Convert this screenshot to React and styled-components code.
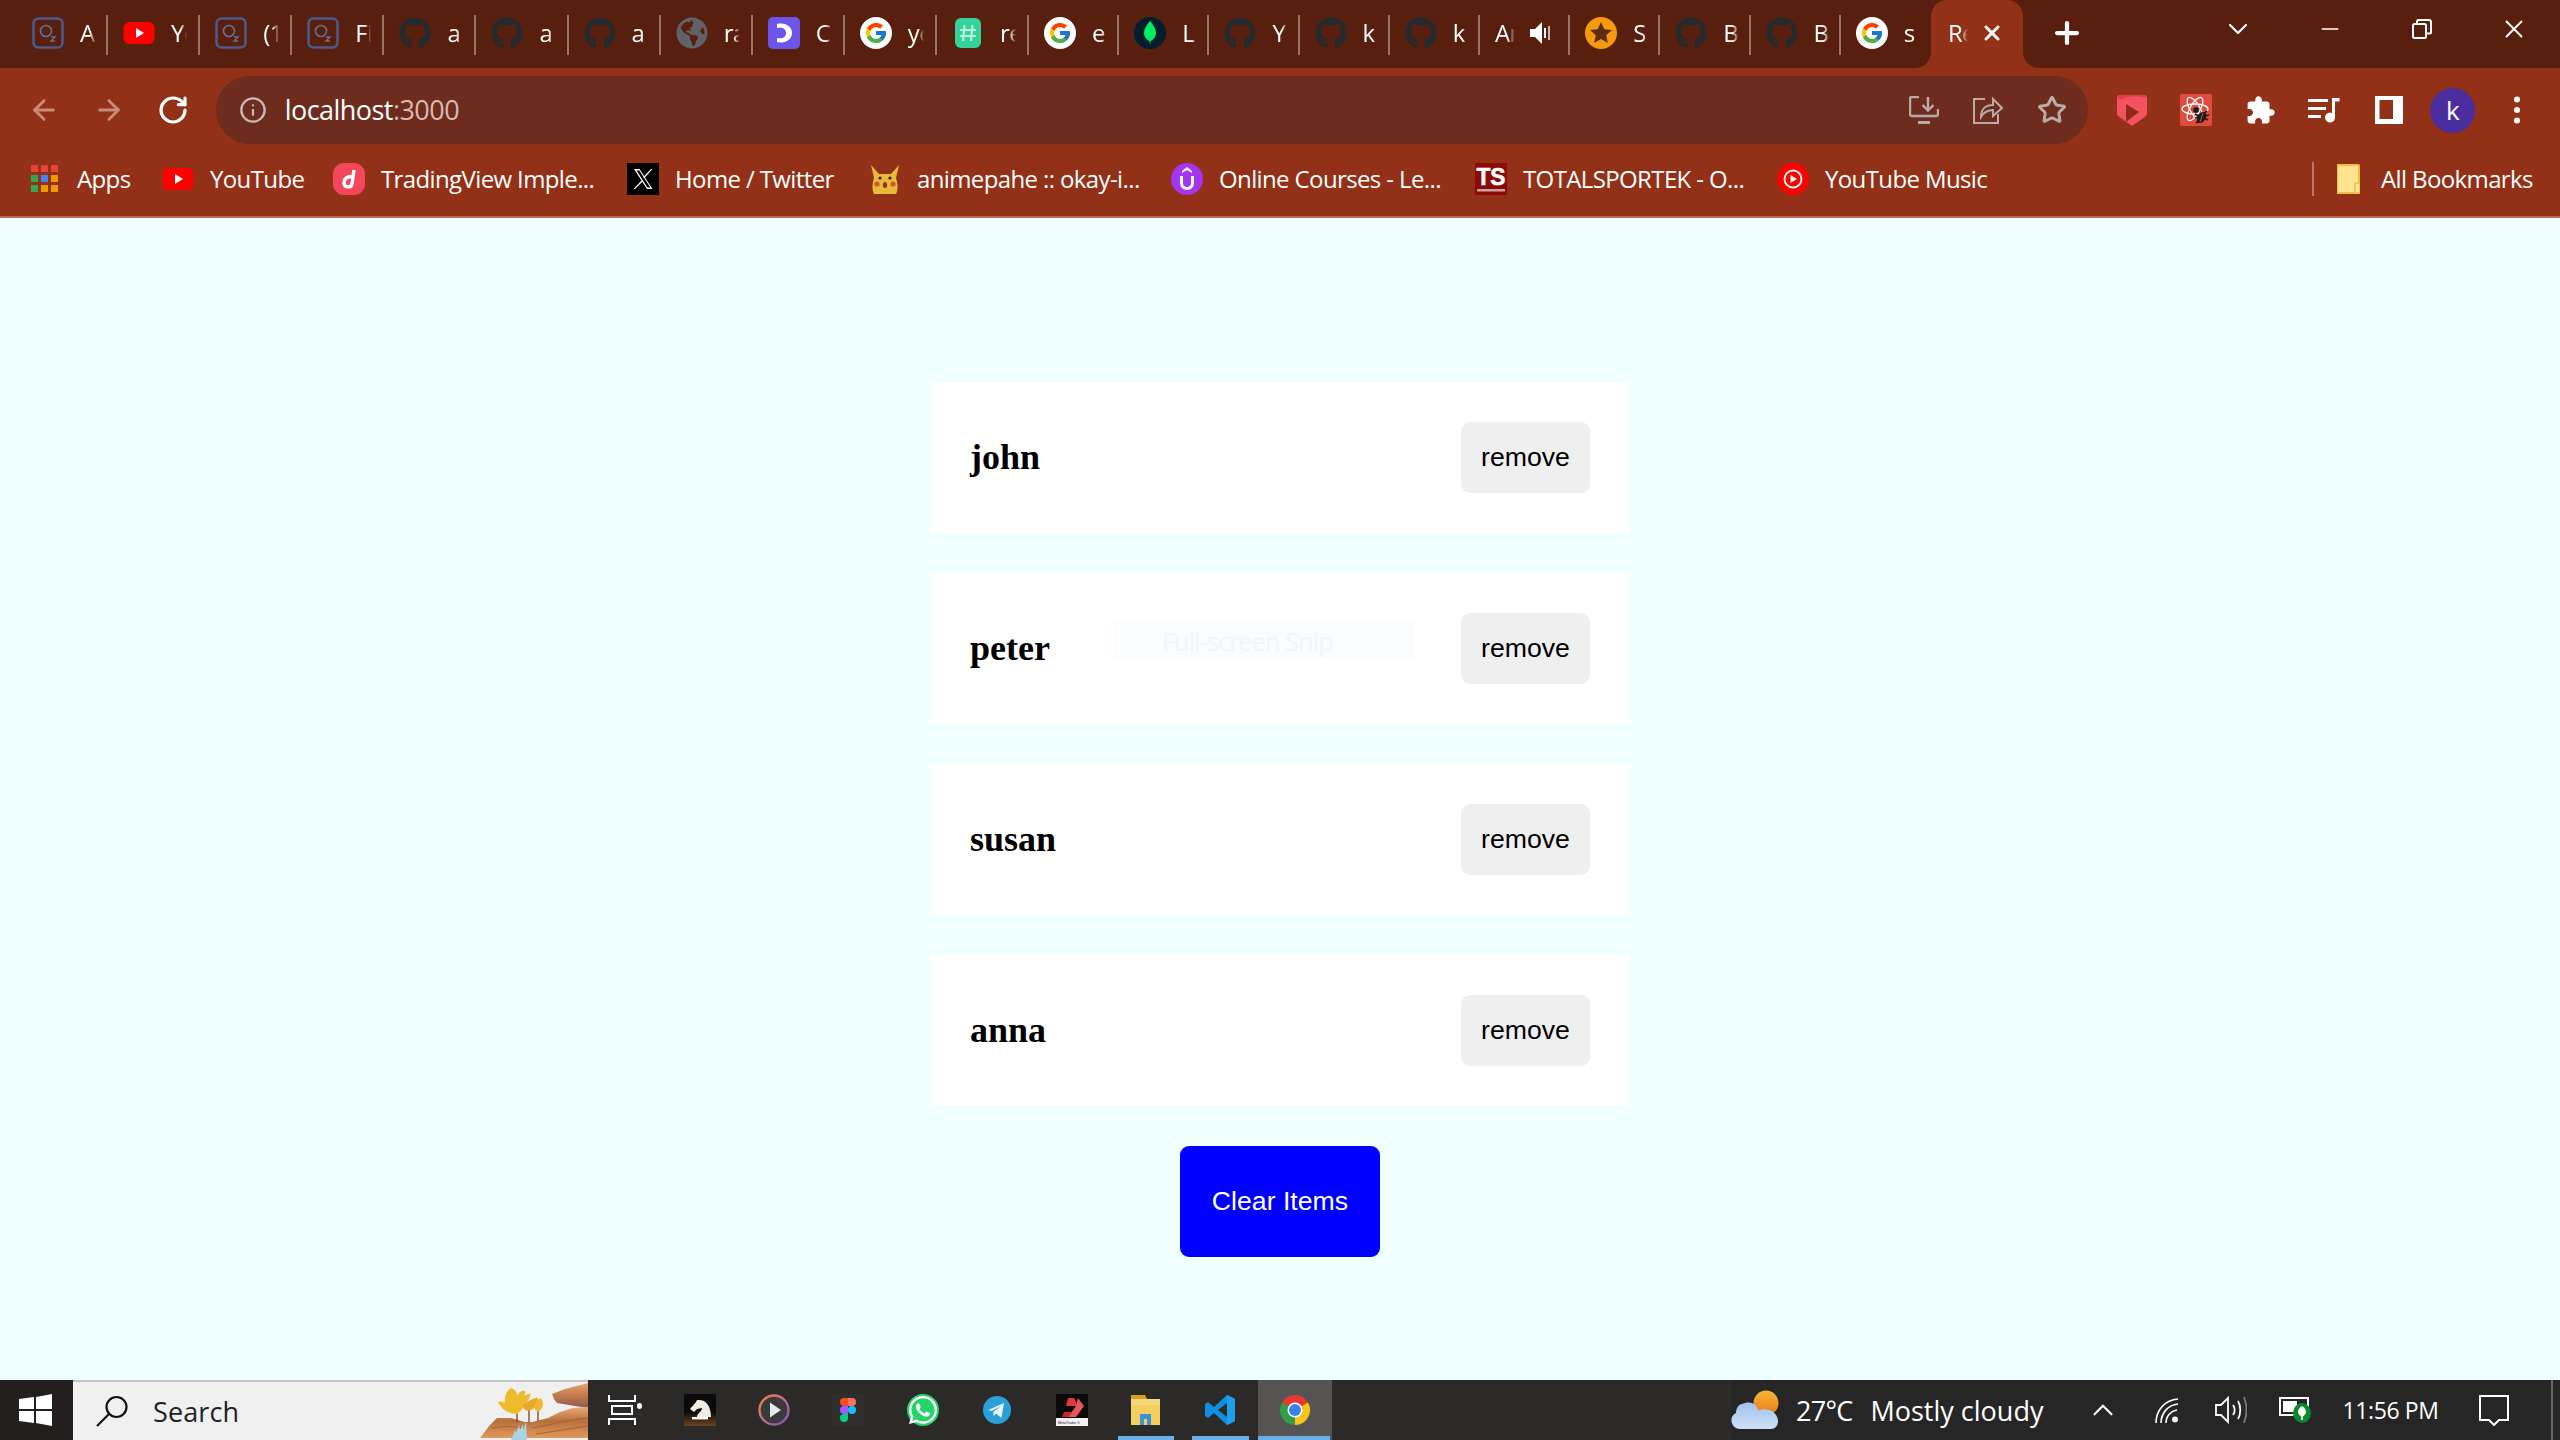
import React from "react";
import styled, { createGlobalStyle } from "styled-components";
import { ArrowLeft, ArrowRight, RotateCw, Star, X, Plus, ChevronDown, ChevronUp, Minus, Info } from "lucide-react";
import { FaGithub, FaGlobeAmericas, FaWhatsapp } from "react-icons/fa";
import { FcGoogle } from "react-icons/fc";

const FRAME = "#591f0e";
const BAR = "#923018";
const UI = '"Open Sans", "Noto Sans", sans-serif';

const Global = createGlobalStyle`
  html, body { margin: 0; padding: 0; background: #f0ffff; }
  * { box-sizing: border-box; }
`;

const Shell = styled.div`
  display: flex; flex-direction: column; width: 2560px; height: 1440px; overflow: hidden;
  font-family: ${UI};
`;

/* ---------- tab strip ---------- */
const TabStrip = styled.div`
  display: flex; height: 68px; background: ${FRAME}; padding-left: 16px; flex: none;
`;
const Tab = styled.div`
  display: flex; align-items: center; height: 68px; width: ${(p) => p.$w}px; flex: none;
  padding-left: ${(p) => (p.$first ? 16 : 15)}px; padding-bottom: 3px; color: #fff; position: relative;
`;
const TabIcon = styled.span`
  display: flex; align-items: center; justify-content: center; width: 32px; height: 32px; flex: none;
  margin-right: 16px;
`;
const TabLabel = styled.span`
  display: block; width: ${(p) => p.$w || 16}px; overflow: hidden; white-space: nowrap; flex: none;
  font-size: 24px; line-height: 32px; letter-spacing: -0.6px;
  -webkit-mask-image: linear-gradient(90deg, #000 60%, transparent);
  mask-image: linear-gradient(90deg, #000 60%, transparent);
`;
const TabGlyph = styled.span`
  display: flex; margin-left: ${(p) => p.$ml}px; flex: none;
`;
const TabSep = styled.span`
  position: absolute; right: 0; top: 15px; width: 2px; height: 40px; background: rgba(255, 255, 255, 0.38);
`;
const ActiveTab = styled.div`
  position: relative; display: flex; align-items: center; flex: none; width: 92px; height: 68px;
  padding: 0 0 3px 17px; background: ${BAR}; color: #fff; border-radius: 16px 16px 0 0;
  &::before, &::after { content: ""; position: absolute; bottom: 0; width: 16px; height: 16px; }
  &::before { left: -16px; background: radial-gradient(circle at 0 0, transparent 15.5px, ${BAR} 16.5px); }
  &::after { right: -16px; background: radial-gradient(circle at 100% 0, transparent 15.5px, ${BAR} 16.5px); }
`;
const NewTab = styled.span`
  display: flex; align-items: center; justify-content: center; width: 40px; height: 66px; margin-left: 24px; color: #fff;
`;
const WinControls = styled.div`
  display: flex; margin-left: auto;
`;
const WinBtn = styled.span`
  display: flex; align-items: center; justify-content: center; width: 92px; height: 58px; color: #fff;
`;
const GoogleBadge = styled.span`
  display: flex; align-items: center; justify-content: center; width: 32px; height: 32px; border-radius: 50%; background: #fff;
`;

/* ---------- toolbar ---------- */
const Toolbar = styled.div`
  display: flex; align-items: flex-end; height: 76px; background: ${BAR}; padding-left: 12px; flex: none;
`;
const NavBtn = styled.span`
  display: flex; align-items: center; justify-content: center; width: 64.6px; height: 68px; flex: none;
  color: ${(p) => (p.$dim ? "#c78c78" : "#fff")};
`;
const Omnibox = styled.div`
  display: flex; align-items: center; width: 1872px; height: 68px; margin-left: 10px; padding: 0 4px 0 23px;
  border-radius: 34px; background: #6d2c1d; flex: none;
`;
const Address = styled.span`
  margin-left: 18px; font-size: 27px; letter-spacing: -0.55px; color: #fff; line-height: 34px;
`;
const Port = styled.span`
  color: #d9b9ae;
`;
const OmniIcons = styled.div`
  display: flex; margin-left: auto;
`;
const OmniBtn = styled.span`
  display: flex; align-items: center; justify-content: center; width: 64px; height: 68px; color: #b9aca8;
`;
const ExtIcons = styled.div`
  display: flex; margin-left: 12px;
`;
const ExtBtn = styled.span`
  display: flex; align-items: center; justify-content: center; width: 64.2px; height: 68px; color: #fff;
`;
const Avatar = styled.span`
  display: flex; align-items: center; justify-content: center; width: 45px; height: 45px; border-radius: 50%;
  background: #4a2ea0; color: #fff; font-size: 26px; line-height: 1;
`;

/* ---------- bookmarks ---------- */
const BookmarkBar = styled.div`
  display: flex; align-items: center; height: 74px; background: #933118; padding: 0 0 2px 29px; flex: none;
  border-bottom: 2px solid #b06a55; color: #fff;
`;
const Bookmark = styled.div`
  display: flex; align-items: center; gap: 16px; width: ${(p) => p.$w}px; flex: none;
`;
const BmIcon = styled.span`
  display: flex; align-items: center; justify-content: center; width: 32px; height: 32px; flex: none;
`;
const BmText = styled.span`
  font-size: 24px; line-height: 32px; white-space: nowrap; letter-spacing: -0.62px;
`;
const BmSep = styled.span`
  width: 2px; height: 34px; background: rgba(255, 255, 255, 0.35); margin-left: auto; margin-right: 23px;
`;
const AllBookmarks = styled.div`
  display: flex; align-items: center; gap: 21px; width: 223px; flex: none;
`;

/* ---------- page ---------- */
const Main = styled.main`
  flex: 1; background: #f0ffff; padding-top: 164px;
  display: flex; flex-direction: column; align-items: center;
  font-family: "Liberation Serif", serif;
`;
const Card = styled.article`
  position: relative; display: flex; align-items: center; justify-content: space-between;
  width: 700px; height: 151px; margin-bottom: 40px; padding: 40px; background: #fff;
`;
const Name = styled.h4`
  margin: 0; font-size: 36px; line-height: 41px; font-weight: 700; color: #000; font-family: "Liberation Serif", serif;
`;
const RemoveBtn = styled.button`
  width: 129px; height: 71px; padding: 0; border: 0; border-radius: 9px; background: #efefef; color: #000;
  font-family: "Liberation Sans", Arial, sans-serif; font-size: 26.67px;
`;
const ClearBtn = styled.button`
  width: 200px; height: 111px; padding: 0; border: 0; border-radius: 9px; background: #0000ff; color: #fff;
  font-family: "Liberation Sans", Arial, sans-serif; font-size: 26.67px;
`;
const SnipToast = styled.div`
  position: absolute; left: 183px; top: 47px; width: 301px; height: 38px; background: #fbfcff; color: #f2f4f8;
  font-family: ${UI}; font-size: 25px; line-height: 36px; letter-spacing: -0.8px; padding: 3px 0 0 49px; overflow: hidden;
`;

/* ---------- taskbar ---------- */
const Taskbar = styled.footer`
  display: flex; align-items: stretch; height: 60px; background: #2b2a29; flex: none; color: #fff;
`;
const Start = styled.div`
  display: flex; align-items: center; justify-content: center; width: 73px; background: #231f1f; padding-right: 2px;
`;
const SearchBox = styled.div`
  display: flex; align-items: center; width: 515px; background: #f0f0f0; border-top: 2px solid #c4c4c4;
  padding-left: 23px; color: #222; overflow: hidden; flex: none;
`;
const SearchText = styled.span`
  margin-left: 24px; font-size: 27px; letter-spacing: 0.1px;
`;
const SearchArt = styled.svg`
  margin-left: auto; flex: none; display: block;
`;
const Slot = styled.div`
  position: relative; display: flex; align-items: center; justify-content: center; width: 74.4px; flex: none;
  background: ${(p) => (p.$active ? "#555453" : "transparent")};
  &::after {
    content: ""; display: ${(p) => (p.$open ? "block" : "none")}; position: absolute; bottom: 0; height: 4px;
    left: ${(p) => (p.$active ? 0 : 9)}px; right: ${(p) => (p.$active ? 2 : 9)}px; background: #6db0e8;
  }
`;
const WhatsBadge = styled.span`
  display: flex; width: 32px; height: 32px; border-radius: 50%; background: #25d366;
`;
const Tray = styled.div`
  display: flex; align-items: center; margin-left: auto; background: #262626;
`;
const Weather = styled.div`
  display: flex; align-items: center; width: 313px; font-size: 27px; letter-spacing: -0.75px; margin-right: 27px; flex: none;
`;
const WeatherArt = styled.svg`
  display: block; flex: none;
`;
const Temp = styled.span`
  margin-left: 16px; margin-right: 18px;
`;
const Sky = styled.span`
  letter-spacing: 0;
`;
const TrayBtn = styled.div`
  display: flex; align-items: center; justify-content: center; width: 64px; height: 60px; flex: none;
`;
const Clock = styled.div`
  width: 127px; text-align: center; font-size: 23px; letter-spacing: -0.4px; flex: none;
`;
const NotifBtn = styled.div`
  display: flex; align-items: center; justify-content: center; width: 80px; height: 60px; margin-right: 17px; flex: none;
`;
const ShowDesktop = styled.div`
  width: 9px; height: 60px; border-left: 2px solid #6a6a6a; flex: none;
`;

/* ---------- drawings ---------- */
const O2 = () => (
  <svg width="32" height="32" viewBox="0 0 32 32">
    <rect x="1.5" y="1.5" width="29" height="29" rx="5" fill="none" stroke="#4c5a8c" strokeWidth="2.5" />
    <circle cx="14" cy="14" r="5.5" fill="none" stroke="#66708f" strokeWidth="1.6" />
    <path d="M19 20h4l-4 4h4" fill="none" stroke="#66708f" strokeWidth="1.4" />
  </svg>
);
const Yt = () => (
  <svg width="32" height="32" viewBox="0 0 32 32">
    <rect x="0.5" y="5" width="31" height="22" rx="6" fill="#ff0000" />
    <path d="M13 11l8 5-8 5z" fill="#fff" />
  </svg>
);
const Gh = () => <FaGithub size={32} color="#24292e" />;
const Globe = () => <FaGlobeAmericas size={32} color="#5f6368" />;
const Purple = () => (
  <svg width="32" height="32" viewBox="0 0 32 32">
    <rect width="32" height="32" rx="5" fill="#6c55e8" />
    <path d="M9 7c9-2 15 3 15 9s-6 11-15 9v-4c6 1 9-1 9-5s-3-6-9-5z" fill="#fff" />
  </svg>
);
const G = () => (
  <GoogleBadge><FcGoogle size={24} /></GoogleBadge>
);
const Mint = () => (
  <svg width="32" height="32" viewBox="0 0 32 32">
    <rect x="3" y="1" width="26" height="30" rx="6" fill="#35d39c" />
    <path d="M12.5 8l-1.5 16M20.5 8l-1.5 16M8 13h16M8 19h16" stroke="#bff3de" strokeWidth="2" fill="none" />
  </svg>
);
const Mongo = () => (
  <svg width="32" height="32" viewBox="0 0 32 32">
    <circle cx="16" cy="16" r="16" fill="#001e2b" />
    <path d="M16 4c4 5 6 8 6 12 0 4-3 7-5.4 8L16 28l-.6-4C13 23 10 20 10 16c0-4 2-7 6-12z" fill="#00ed64" />
  </svg>
);
const StarBadge = () => (
  <svg width="32" height="32" viewBox="0 0 32 32">
    <circle cx="16" cy="16" r="16" fill="#f59a0c" />
    <path d="M16 5l3.3 7.2 7.7.8-5.8 5.2 1.7 7.8-6.9-4-6.9 4 1.7-7.8L5 13l7.7-.8z" fill="#5b2c10" />
  </svg>
);
const Speaker = () => (
  <svg width="22" height="26" viewBox="0 0 22 26">
    <path d="M1 9h5l7-7v22l-7-7H1z" fill="#fff" />
    <rect x="15" y="8" width="2" height="10" fill="#fff" />
    <rect x="19" y="6" width="2" height="14" fill="#bbb" />
  </svg>
);
const Apps = () => (
  <svg width="28" height="28" viewBox="0 0 28 28">
    {[["#ea4335", "#ea4335", "#ea4335"], ["#34a853", "#4285f4", "#f29900"], ["#34a853", "#f29900", "#f29900"]].map((row, r) =>
      row.map((c, i) => <rect key={`${r}${i}`} x={i * 10} y={r * 10} width="7" height="7" fill={c} />)
    )}
  </svg>
);
const Trading = () => (
  <svg width="32" height="32" viewBox="0 0 32 32">
    <rect width="32" height="32" rx="11" fill="#f4475b" />
    <path d="M21 7l-2 14c-1 4-8 4-8-1 0-5 4-7 9-6" fill="none" stroke="#fff" strokeWidth="3.4" />
  </svg>
);
const XLogo = () => (
  <svg width="32" height="32" viewBox="0 0 32 32">
    <rect width="32" height="32" fill="#000" />
    <path d="M7 6h5.5l13 20H20zM9.5 7.5l11 17h2.8l-11-17z" fill="#fff" fillRule="evenodd" />
    <path d="M24 6h1.5L17 15.5l-.8-1.2zM14.5 17.5l.8 1.2L8 26H6.5z" fill="#fff" />
  </svg>
);
const Pika = () => (
  <svg width="32" height="32" viewBox="0 0 32 32">
    <path d="M2 2l8 9h12l8-9-3 13c2 6 2 12 0 16H5C3 27 3 21 5 15z" fill="#e8b93a" />
    <circle cx="11" cy="15" r="1.6" fill="#222" />
    <circle cx="21" cy="15" r="1.6" fill="#222" />
    <circle cx="8" cy="21" r="2.6" fill="#d6562c" />
    <circle cx="24" cy="21" r="2.6" fill="#d6562c" />
    <ellipse cx="16" cy="22" rx="2" ry="3" fill="#8a3020" />
  </svg>
);
const Udemy = () => (
  <svg width="32" height="32" viewBox="0 0 32 32">
    <circle cx="16" cy="16" r="16" fill="#a435f0" />
    <path d="M16 4l5 4v2l-5-3-5 3V8z" fill="#fff" />
    <path d="M10.5 13v7a5.5 5.5 0 0011 0v-7" fill="none" stroke="#fff" strokeWidth="3" />
  </svg>
);
const Ts = () => (
  <svg width="32" height="32" viewBox="0 0 32 32">
    <rect width="32" height="32" fill="#8c0a0a" />
    <text x="16" y="22" textAnchor="middle" fontFamily="Liberation Sans, sans-serif" fontWeight="700" fontSize="24" fill="#fff" stroke="#fff" strokeWidth="0.6" textLength="29" lengthAdjust="spacingAndGlyphs">TS</text>
    <rect x="2" y="26" width="28" height="2.5" fill="#c9a3a3" />
  </svg>
);
const YtMusic = () => (
  <svg width="32" height="32" viewBox="0 0 32 32">
    <circle cx="16" cy="16" r="16" fill="#ff0000" />
    <circle cx="16" cy="16" r="8.5" fill="none" stroke="#fff" strokeWidth="1.8" />
    <path d="M13.5 12l6.5 4-6.5 4z" fill="#fff" />
  </svg>
);
const Folder = () => (
  <svg width="23" height="30" viewBox="0 0 23 30">
    <rect x="0" y="1" width="22" height="28" rx="1" fill="#fde28f" stroke="#eec042" strokeWidth="2" />
    <rect x="18" y="19" width="5" height="10" rx="1" fill="#fde28f" stroke="#eec042" strokeWidth="1.5" />
  </svg>
);
const Restore = () => (
  <svg width="20" height="20" viewBox="0 0 20 20" fill="none" stroke="#fff" strokeWidth="2">
    <rect x="1" y="5" width="13" height="14" rx="1.5" />
    <path d="M5 5V2.5A1.5 1.5 0 016.5 1h10A2 2 0 0119 3v10a1.5 1.5 0 01-1.5 1.5H14" />
  </svg>
);
const InstallIcon = () => (
  <svg width="30" height="28" viewBox="0 0 30 28" fill="none" stroke="currentColor" strokeWidth="2.4">
    <path d="M10 1H3a2 2 0 00-2 2v15a2 2 0 002 2h24a2 2 0 002-2v-5" />
    <path d="M19 1v13M13.5 9l5.5 5.5L24.5 9" />
    <path d="M9 25h12v3H9z" fill="currentColor" stroke="none" />
  </svg>
);
const ShareIcon = () => (
  <svg width="30" height="28" viewBox="0 0 30 28" fill="none" stroke="currentColor" strokeWidth="2">
    <path d="M12 3H1v24h24V18" />
    <path d="M8 21c0-8 5-12 12-12V3l9 9-9 8v-6c-5 0-9 2-12 7z" />
  </svg>
);
const Pocket = () => (
  <svg width="30" height="31" viewBox="0 0 30 31">
    <path d="M3 0h24a3 3 0 013 3v15c0 2-1 3-3 4.5L15 31 3 22.5C1 21 0 20 0 18V3a3 3 0 013-3z" fill="#f4525f" />
    <path d="M0 3a3 3 0 013-3h24a3 3 0 013 3c-6-2-18-2-22 0-3 2-5 1-8 0z" fill="#dd3f4f" />
    <path d="M9 9l13 8-13 10z" fill="#8f2a18" />
  </svg>
);
const ReactExt = () => (
  <svg width="32" height="32" viewBox="0 0 32 32">
    <rect width="32" height="32" rx="2" fill="#df4b3d" />
    <g fill="none" stroke="#fff" strokeWidth="1.3">
      <ellipse cx="15" cy="15" rx="13" ry="5" />
      <ellipse cx="15" cy="15" rx="13" ry="5" transform="rotate(60 15 15)" />
      <ellipse cx="15" cy="15" rx="13" ry="5" transform="rotate(120 15 15)" />
    </g>
    <circle cx="16" cy="16" r="2.8" fill="#1c1c1c" />
    <g stroke="#1c1c1c" strokeWidth="1.6" fill="none">
      <path d="M15 20l4 2M15 24l4-1M16 29l4-3M27 17l-4 3M29 21l-5 1M28 26l-4-2" />
    </g>
    <ellipse cx="21.5" cy="23.5" rx="4.2" ry="6" transform="rotate(35 21.5 23.5)" fill="#1c1c1c" />
    <path d="M23 19l-3 9" stroke="#df4b3d" strokeWidth="1" />
  </svg>
);
const Puzzle = () => (
  <svg width="31" height="31" viewBox="0 0 24 24" fill="#fff">
    <path d="M20.5 11H19V7c0-1.1-.9-2-2-2h-4V3.5C13 2.12 11.88 1 10.5 1S8 2.12 8 3.5V5H4c-1.1 0-1.99.9-1.99 2v3.8H3.5c1.49 0 2.7 1.21 2.7 2.7s-1.21 2.7-2.7 2.7H2V20c0 1.1.9 2 2 2h3.8v-1.5c0-1.49 1.21-2.7 2.7-2.7 1.49 0 2.7 1.21 2.7 2.7V22H17c1.1 0 2-.9 2-2v-4h1.5c1.38 0 2.5-1.12 2.5-2.5S21.88 11 20.5 11z" />
  </svg>
);
const MediaList = () => (
  <svg width="32" height="26" viewBox="0 0 32 26" fill="#fff">
    <rect x="0" y="2" width="20" height="3" />
    <rect x="0" y="10" width="18" height="3" />
    <rect x="0" y="18" width="13" height="3" />
    <path d="M24 1h7.5v3.5H27V20.5a5 5 0 11-3-4.6z" />
  </svg>
);
const SidePanel = () => (
  <svg width="28" height="28" viewBox="0 0 28 28">
    <path d="M0 0h28v28H0zM4.500 4v19h13.500V4z" fill="#fff" fillRule="evenodd" />
  </svg>
);
const Dots = () => (
  <svg width="8" height="28" viewBox="0 0 8 28" fill="#fff">
    <circle cx="4" cy="3.5" r="3" />
    <circle cx="4" cy="14" r="3" />
    <circle cx="4" cy="24.5" r="3" />
  </svg>
);
const WinLogo = () => (
  <svg width="33" height="32" viewBox="0 0 33 32" fill="#fff">
    <path d="M0 5l15-2v12H0zM17 3l16-3v15H17zM0 17h15v12L0 27zM17 17h16v15l-16-3z" />
  </svg>
);
const Lens = () => (
  <svg width="33" height="32" viewBox="0 0 33 32" fill="none" stroke="#111" strokeWidth="2.2">
    <circle cx="20.5" cy="12" r="10" />
    <path d="M13 19L1 31" />
  </svg>
);
const Art = () => (
  <SearchArt width="110" height="58" viewBox="8 2 110 58">
    <defs>
      <linearGradient id="rock" x1="0" y1="0" x2="0" y2="1">
        <stop offset="0" stopColor="#e9ab78" />
        <stop offset="0.45" stopColor="#b86f3e" />
        <stop offset="1" stopColor="#e09a5e" />
      </linearGradient>
      <linearGradient id="ledge" x1="0" y1="0" x2="0" y2="1">
        <stop offset="0" stopColor="#eaa56c" />
        <stop offset="0.5" stopColor="#c27a4c" />
        <stop offset="1" stopColor="#8d5a50" />
      </linearGradient>
    </defs>
    <path d="M118 3L95 9 82 14l2 5 3 4 18 3 13 2z" fill="url(#ledge)" />
    <path d="M118 27l-15 1-13 4-12 6-16 4H55l-14-4-14 0-8 8-9 12h108z" fill="url(#rock)" />
    <g fill="none" stroke="#a6633a" strokeWidth="1">
      <path d="M22 48c10-2 22-2 30 0M62 48c14-2 34-8 56-10M66 54c16-2 36-6 52-8" />
    </g>
    <path d="M41 60l4-10 1 3 3-8 1 5 3-6v6l3-8 1 18z" fill="#a9d3e6" />
    <g fill="none" stroke="#7d4a25" strokeWidth="1.4">
      <path d="M47 20l0 22M59 24l0 18M68 28l0 13" />
    </g>
    <g fill="#eeba2e">
      <path d="M47 34c-8 0-15-4-19-12 3-1 5 0 7 1-1-6 1-12 6-15 4 1 6 4 6 8 2-4 5-6 8-5 1 1 0 3-1 5 3-2 5-2 7-2-3 7-8 16-14 20z" />
      <path d="M59 31c-4 0-6-3-6-6 3-1 5-5 8-5 0 0 6-3 7-2 0 5-3 11-9 13z" fill="#e8a926" />
      <path d="M68 32c-3-2-5-5-3-8 1-3 4-5 6-6 3 4 3 11-3 14z" fill="#efb733" />
    </g>
  </SearchArt>
);
const TaskView = () => (
  <svg width="34" height="30" viewBox="0 0 34 30" fill="#fff">
    <path d="M0 0h2v5h24V0h2v7H0zM0 30h2v-5h24v5h2v-7H0z" />
    <path d="M3 10h22v10H3zm2 2v6h18v-6z" fillRule="evenodd" />
    <ellipse cx="31.5" cy="11" rx="2.5" ry="3" />
  </svg>
);
const Chess = () => (
  <svg width="32" height="32" viewBox="0 0 32 32">
    <defs>
      <linearGradient id="chessbg" x1="0" y1="0" x2="0" y2="1">
        <stop offset="0.55" stopColor="#0a0a0a" />
        <stop offset="1" stopColor="#6d4420" />
      </linearGradient>
    </defs>
    <rect width="32" height="32" fill="url(#chessbg)" />
    <path d="M15 6c7 0 12 6 12 17H13c0-4 5-5 5-9l-5 1-3 3-4-3 6-7 1-2z" fill="#f0ece4" />
    <rect x="8" y="23" width="16" height="2.400" fill="#fff" />
  </svg>
);
const MediaCircle = () => (
  <svg width="32" height="32" viewBox="0 0 32 32">
    <defs>
      <linearGradient id="mc" x1="0" y1="0" x2="1" y2="1">
        <stop offset="0" stopColor="#f08a3c" />
        <stop offset="1" stopColor="#8a4fc8" />
      </linearGradient>
    </defs>
    <circle cx="16" cy="16" r="14.5" fill="#3a3a3c" stroke="url(#mc)" strokeWidth="2.4" />
    <path d="M12 8.500l11 7.500-11 7.500z" fill="#e8e8e8" />
  </svg>
);
const Figma = () => (
  <svg width="32" height="32" viewBox="0 0 32 32">
    <rect width="32" height="32" fill="#2f2e2d" />
    <g transform="translate(3.2 3.2) scale(.8)">
      <path d="M16 1h-5a5 5 0 000 10h5z" fill="#f24e1e" />
      <path d="M16 1h5a5 5 0 010 10h-5z" fill="#ff7262" />
      <path d="M16 11h-5a5 5 0 000 10h5z" fill="#a259ff" />
      <circle cx="21" cy="16" r="5" fill="#1abcfe" />
      <path d="M11 21h5v5a5 5 0 11-5-5z" fill="#0acf83" />
    </g>
  </svg>
);
const Whats = () => (
  <WhatsBadge><FaWhatsapp size={32} color="#fff" /></WhatsBadge>
);
const Telegram = () => (
  <svg width="28" height="28" viewBox="0 0 32 32">
    <circle cx="16" cy="16" r="16" fill="#2a9fd8" />
    <path d="M6 16l18-8-3 17-6-5-3 3v-5l9-7-11 6z" fill="#e8f4fb" />
  </svg>
);
const MetaT = () => (
  <svg width="32" height="32" viewBox="0 0 32 32">
    <rect width="32" height="32" fill="#0a0a0a" />
    <path d="M12 4h6l4 8H10z" fill="#e23a3a" />
    <path d="M22 4l6 8-8 11h-8l8-11z" fill="#e8555a" />
    <path d="M8 18h8l-4 5H6z" fill="#c5282c" />
    <rect y="24" width="32" height="8" fill="#f2f2f2" />
    <text x="2" y="29.500" fontFamily="Liberation Sans, sans-serif" fontSize="3.600" fill="#222">MetaTrader 5</text>
  </svg>
);
const Explorer = () => (
  <svg width="30" height="32" viewBox="0 0 30 32">
    <path d="M0 1h14l2 4H0z" fill="#d6a21c" />
    <rect y="5" width="29" height="26" fill="#f4cf5f" />
    <rect y="5" width="29" height="6" fill="#f6d97c" />
    <path d="M9 31V20h11v11h-4v-6h-3v6z" fill="#3d93d8" />
  </svg>
);
const VsCode = () => (
  <svg width="32" height="32" viewBox="0 0 32 32">
    <path d="M23 1l8 4v22l-8 4-13-12-6 5-3-2V10l3-2 6 5zM23 9l-9 7 9 7z" fill="#0f8fe0" fillRule="evenodd" />
    <path d="M23 1l8 4v22l-8 4z" fill="#1c9fee" />
  </svg>
);
const Chrome = () => (
  <svg width="32" height="32" viewBox="0 0 32 32">
    <path d="M16 16L3 8.5A15 15 0 0129 8.5z" fill="#e8392f" />
    <path d="M16 16L29 8.5A15 15 0 0116 31z" fill="#f5c518" />
    <path d="M16 16L16 31A15 15 0 013 8.5z" fill="#2f9e47" />
    <circle cx="16" cy="16" r="7.5" fill="#fff" />
    <circle cx="16" cy="16" r="6" fill="#3b82e8" />
  </svg>
);
const Cloud = () => (
  <WeatherArt width="49" height="40" viewBox="0 0 49 40">
    <defs>
      <linearGradient id="sun" x1="0" y1="0" x2="0" y2="1">
        <stop offset="0" stopColor="#f7b733" />
        <stop offset="1" stopColor="#e8781a" />
      </linearGradient>
      <linearGradient id="cl" x1="0" y1="0" x2="0" y2="1">
        <stop offset="0" stopColor="#9fc2ee" />
        <stop offset="1" stopColor="#cfe0f6" />
      </linearGradient>
    </defs>
    <circle cx="35" cy="13" r="12.500" fill="url(#sun)" />
    <path d="M9 39a8.500 8.500 0 01-4-16c0-5 3-9 6-9 8-4 15 0 16 6 10-3 20 2 20 11 0 5-3 8-7 8z" fill="url(#cl)" />
  </WeatherArt>
);
const Wifi = () => (
  <svg width="24" height="25" viewBox="0 0 24 25" fill="none" stroke="#fff" strokeWidth="1.6">
    <path d="M1 25C1 12 10 2 23 1" />
    <path d="M6 25C6 15 13 7 23 6" />
    <path d="M11 25c0-7 5-12 11-13" />
    <circle cx="20" cy="21.500" r="3" fill="#fff" stroke="none" />
  </svg>
);
const Volume = () => (
  <svg width="32" height="28" viewBox="0 0 32 28" fill="none" stroke="#fff" strokeWidth="1.8">
    <path d="M1 9h5l7-7v24l-7-7H1z" />
    <path d="M18 9c2 3 2 7 0 10" />
    <path d="M23 5c3 5 3 13 0 18" />
    <path d="M29 1c3 8 3 18 0 26" stroke="#777" />
  </svg>
);
const Battery = () => (
  <svg width="32" height="26" viewBox="0 0 32 26">
    <rect x="1" y="1" width="28" height="17" fill="none" stroke="#fff" strokeWidth="2" />
    <rect x="4" y="4" width="14" height="11" fill="#fff" />
    <ellipse cx="23" cy="16" rx="9" ry="10" fill="#0a8a2a" />
    <path d="M23 9c3 2 4 4 4 6s-2 4-3.200 4.500V23h-1.600v-3.500C21 19 19 17 19 15s1-4 4-6z" fill="#fff" />
  </svg>
);
const Notif = () => (
  <svg width="30" height="31" viewBox="0 0 30 31" fill="none" stroke="#fff" strokeWidth="2">
    <path d="M1 1h28v24h-9l-5 5-5-5H1z" />
  </svg>
);

const tabs = [
  [<O2 />, "A"], [<Yt />, "Yo"], [<O2 />, "(1"], [<O2 />, "Fi"], [<Gh />, "a"], [<Gh />, "a"], [<Gh />, "a"],
  [<Globe />, "ra"], [<Purple />, "C"], [<G />, "yo"], [<Mint />, "re"], [<G />, "e"], [<Mongo />, "L"], [<Gh />, "Y"],
  [<Gh />, "k"], [<Gh />, "k"], [null, "An"], [<StarBadge />, "S"], [<Gh />, "B"], [<Gh />, "B"], [<G />, "s"],
];

const bookmarks = [
  [<Apps />, "Apps", 133], [<Yt />, "YouTube", 171], [<Trading />, "TradingView Imple...", 294], [<XLogo />, "Home / Twitter", 242],
  [<Pika />, "animepahe :: okay-i...", 302], [<Udemy />, "Online Courses - Le...", 304], [<Ts />, "TOTALSPORTEK - O...", 302], [<YtMusic />, "YouTube Music", 210],
];

const people = ["john", "peter", "susan", "anna"];

const apps = [
  [<TaskView />], [<Chess />], [<MediaCircle />], [<Figma />], [<Whats />], [<Telegram />], [<MetaT />],
  [<Explorer />, true], [<VsCode />, true], [<Chrome />, true, true],
];

export default function App() {
  return (
    <Shell>
      <Global />
      <TabStrip>
        {tabs.map(([icon, label], i) => (
          <Tab key={i} $first={i === 0} $w={i < 11 ? 92.1 : 90.2}>
            {icon ? <TabIcon>{icon}</TabIcon> : null}
            {icon ? <TabLabel>{label}</TabLabel> : (
              <>
                <TabLabel $w={20}>{label}</TabLabel>
                <TabGlyph $ml={14}><Speaker /></TabGlyph>
              </>
            )}
            {i < 20 ? <TabSep /> : null}
          </Tab>
        ))}
        <ActiveTab>
          <TabLabel $w={20}>React</TabLabel>
          <TabGlyph $ml={12}><X size={24} strokeWidth={3} /></TabGlyph>
        </ActiveTab>
        <NewTab><Plus size={34} strokeWidth={3} /></NewTab>
        <WinControls>
          <WinBtn><ChevronDown size={32} strokeWidth={1.6} /></WinBtn>
          <WinBtn><Minus size={26} strokeWidth={1.6} /></WinBtn>
          <WinBtn><Restore /></WinBtn>
          <WinBtn><X size={30} strokeWidth={1.5} /></WinBtn>
        </WinControls>
      </TabStrip>

      <Toolbar>
        <NavBtn $dim><ArrowLeft size={32} strokeWidth={2.2} /></NavBtn>
        <NavBtn $dim><ArrowRight size={32} strokeWidth={2.2} /></NavBtn>
        <NavBtn><RotateCw size={32} strokeWidth={2.4} /></NavBtn>
        <Omnibox>
          <Info size={28} color="#c4b9b5" strokeWidth={2} />
          <Address>localhost<Port>:3000</Port></Address>
          <OmniIcons>
            <OmniBtn><InstallIcon /></OmniBtn>
            <OmniBtn><ShareIcon /></OmniBtn>
            <OmniBtn><Star size={30} strokeWidth={2.4} /></OmniBtn>
          </OmniIcons>
        </Omnibox>
        <ExtIcons>
          <ExtBtn><Pocket /></ExtBtn>
          <ExtBtn><ReactExt /></ExtBtn>
          <ExtBtn><Puzzle /></ExtBtn>
          <ExtBtn><MediaList /></ExtBtn>
          <ExtBtn><SidePanel /></ExtBtn>
          <ExtBtn><Avatar>k</Avatar></ExtBtn>
          <ExtBtn><Dots /></ExtBtn>
        </ExtIcons>
      </Toolbar>

      <BookmarkBar>
        {bookmarks.map(([icon, label, w]) => (
          <Bookmark key={label} $w={w}>
            <BmIcon>{icon}</BmIcon>
            <BmText>{label}</BmText>
          </Bookmark>
        ))}
        <BmSep />
        <AllBookmarks>
          <Folder />
          <BmText>All Bookmarks</BmText>
        </AllBookmarks>
      </BookmarkBar>

      <Main>
        {people.map((name) => (
          <Card key={name}>
            <Name>{name}</Name>
            {name === "peter" ? <SnipToast>Full-screen Snip</SnipToast> : null}
            <RemoveBtn>remove</RemoveBtn>
          </Card>
        ))}
        <ClearBtn>Clear Items</ClearBtn>
      </Main>

      <Taskbar>
        <Start><WinLogo /></Start>
        <SearchBox>
          <Lens />
          <SearchText>Search</SearchText>
          <Art />
        </SearchBox>
        {apps.map(([icon, open, active], i) => (
          <Slot key={i} $open={open} $active={active}>{icon}</Slot>
        ))}
        <Tray>
          <Weather>
            <Cloud />
            <Temp>27°C</Temp>
            <Sky>Mostly cloudy</Sky>
          </Weather>
          <TrayBtn><ChevronUp size={34} strokeWidth={1.5} /></TrayBtn>
          <TrayBtn><Wifi /></TrayBtn>
          <TrayBtn><Volume /></TrayBtn>
          <TrayBtn><Battery /></TrayBtn>
          <Clock>11:56 PM</Clock>
          <NotifBtn><Notif /></NotifBtn>
          <ShowDesktop />
        </Tray>
      </Taskbar>
    </Shell>
  );
}
